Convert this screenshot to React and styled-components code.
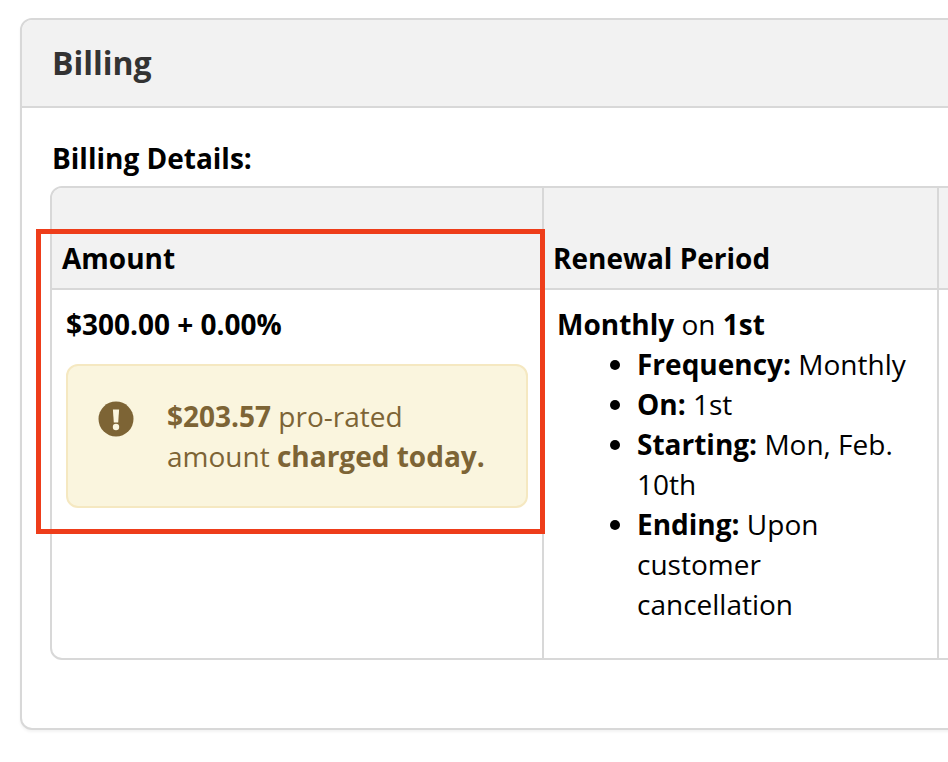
import React from "react";
import styled, { createGlobalStyle } from "styled-components";

const Global = createGlobalStyle`
  html, body { margin: 0; padding: 0; background: #fff; overflow: hidden; }
  body { font-family: "Open Sans", "Noto Sans", sans-serif; color: #000; }
`;

const Page = styled.div`
  position: relative;
  width: 948px;
  height: 762px;
  overflow: hidden;
  padding: 18px 0 0 20px;
  box-sizing: border-box;
`;

const Panel = styled.section`
  width: 1200px;
  height: 712px;
  box-sizing: border-box;
  border: 2px solid #d8d8d8;
  border-radius: 12px;
  box-shadow: 0 2px 3px rgba(0, 0, 0, 0.05);
  background: #fff;
  overflow: hidden;
`;

const PanelHeader = styled.header`
  height: 88px;
  box-sizing: border-box;
  background: #f2f2f2;
  border-bottom: 2px solid #d8d8d8;
  padding: 0 0 0 30px;
  display: flex;
  align-items: center;
`;

const Title = styled.h2`
  margin: 0;
  font-size: 32px;
  line-height: 44px;
  font-weight: 700;
  color: #333;
`;

const PanelBody = styled.div`
  padding: 30px 0 0 28px;
`;

const Subtitle = styled.h3`
  margin: 0 0 8px 2px;
  font-size: 28px;
  line-height: 40px;
  font-weight: 700;
`;

const Table = styled.div`
  display: grid;
  grid-template-columns: 492px 395px 1fr;
  grid-template-rows: 102px 368px;
  width: 1140px;
  box-sizing: border-box;
  border: 2px solid #d8d8d8;
  border-radius: 12px;
  overflow: hidden;
`;

const HeadCell = styled.div`
  background: #f2f2f2;
  border-bottom: 2px solid #d8d8d8;
  border-right: ${(p) => (p.$last ? "none" : "2px solid #d8d8d8")};
  display: flex;
  align-items: flex-end;
  padding: 0 10px 10px ${(p) => p.$inset ?? 10}px;
  font-size: 28px;
  line-height: 40px;
  font-weight: 700;
`;

const Cell = styled.div`
  border-right: ${(p) => (p.$last ? "none" : "2px solid #d8d8d8")};
  padding: 14px 14px 0 ${(p) => p.$inset ?? 14}px;
  font-size: 28px;
  line-height: 40px;
`;

const Callout = styled.div`
  margin-top: 20px;
  height: 144px;
  box-sizing: border-box;
  display: flex;
  gap: 33px;
  padding: 30px 30px 0 30px;
  background: #faf5de;
  border: 2px solid #f5e8c1;
  border-radius: 12px;
  color: #7d6435;
`;

const CalloutIcon = styled.svg`
  flex: none;
  width: 36px;
  height: 36px;
  margin-top: 5px;
`;

const List = styled.ul`
  margin: 0;
  padding: 0 0 0 80px;
`;

const Highlight = styled.div`
  position: absolute;
  left: 36px;
  top: 229px;
  width: 509px;
  height: 305px;
  box-sizing: border-box;
  border: 5px solid #ee3d1a;
`;

export default function App() {
  return (
    <Page>
      <Global />
      <Panel>
        <PanelHeader>
          <Title>Billing</Title>
        </PanelHeader>
        <PanelBody>
          <Subtitle>Billing Details:</Subtitle>
          <Table>
            <HeadCell>Amount</HeadCell>
            <HeadCell $inset={9}>Renewal Period</HeadCell>
            <HeadCell $last />
            <Cell>
              <b>$300.00 + 0.00%</b>
              <Callout>
                <CalloutIcon viewBox="0 0 36 36" aria-hidden="true">
                  <circle cx="18" cy="18" r="17.5" fill="#7d6435" />
                  <path d="M14.9 8.5h6.2l-.9 13h-4.4z" fill="#faf5de" />
                  <circle cx="18" cy="26" r="3.2" fill="#faf5de" />
                </CalloutIcon>
                <div>
                  <b>$203.57</b> pro-rated amount <b>charged today.</b>
                </div>
              </Callout>
            </Cell>
            <Cell $inset={13}>
              <div>
                <b>Monthly</b> on <b>1st</b>
              </div>
              <List>
                <li><b>Frequency:</b> Monthly</li>
                <li><b>On:</b> 1st</li>
                <li><b>Starting:</b> Mon, Feb. 10th</li>
                <li><b>Ending:</b> Upon customer cancellation</li>
              </List>
            </Cell>
            <Cell $last />
          </Table>
        </PanelBody>
      </Panel>
      <Highlight />
    </Page>
  );
}
